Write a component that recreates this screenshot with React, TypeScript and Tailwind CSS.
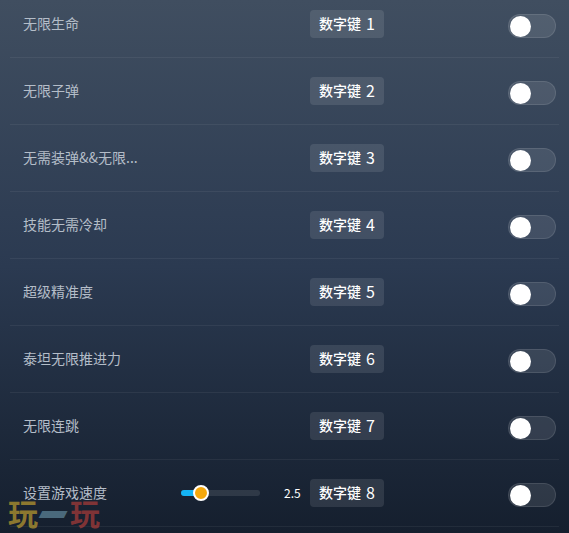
const rows = [
  { name: "无限生命", key: "1" },
  { name: "无限子弹", key: "2" },
  { name: "无需装弹&&无限...", key: "3" },
  { name: "技能无需冷却", key: "4" },
  { name: "超级精准度", key: "5" },
  { name: "泰坦无限推进力", key: "6" },
  { name: "无限连跳", key: "7" },
  { name: "设置游戏速度", key: "8", slider: true },
];

function Toggle() {
  return (
    <div className="mt-1 flex h-6 w-12 shrink-0 items-center rounded-full border border-white/10 bg-white/10 pl-[1px]">
      <div className="h-[21px] w-[21px] rounded-full bg-white" />
    </div>
  );
}

function Slider() {
  return (
    <div className="flex items-center">
      <div className="relative h-[6px] w-[79px] rounded-full bg-white/10">
        <div className="h-[6px] w-[20px] rounded-full bg-[#14b4f5]" />
        <div className="absolute left-[12px] top-[-5px] h-4 w-4 rounded-full border-2 border-white bg-[#f5a80c]" />
      </div>
      <span className="ml-6 w-[17px] text-xs text-white">2.5</span>
    </div>
  );
}

export default function App() {
  return (
    <div className="relative h-[533px] w-[569px] overflow-hidden bg-gradient-to-b from-[#404e60] via-[#2b3a51] to-[#151f2e] font-['Noto_Sans_CJK_SC','Liberation_Sans',sans-serif]">
      <div className="mt-[-9px] flex flex-col px-[10px]">
        {rows.map((row) => (
          <div key={row.key} className="flex h-[67px] items-center border-b border-white/[0.06] pl-[13px] pr-[3px]">
            <span className="w-[158px] shrink-0 pb-[2px] text-sm text-[#b4bdc8]">{row.name}</span>
            <div className="w-[129px] shrink-0">{row.slider && <Slider />}</div>
            <div className="flex h-7 w-[74px] shrink-0 items-center justify-center gap-[5px] rounded bg-white/10 pb-[2px] text-sm font-medium text-white">
              <span>数字键</span>
              <span className="text-base font-normal">{row.key}</span>
            </div>
            <div className="ml-auto">
              <Toggle />
            </div>
          </div>
        ))}
      </div>
      <div className="absolute left-[8px] top-[497px] flex items-center gap-[1px] text-[30px] font-bold leading-[30px] opacity-75">
        <span className="text-[#b3952f]">玩</span>
        <span className="inline-block -skew-x-[40deg] scale-x-90 scale-y-150 font-black text-[#5c8296]">一</span>
        <span className="text-[#a23a38]">玩</span>
      </div>
    </div>
  );
}
